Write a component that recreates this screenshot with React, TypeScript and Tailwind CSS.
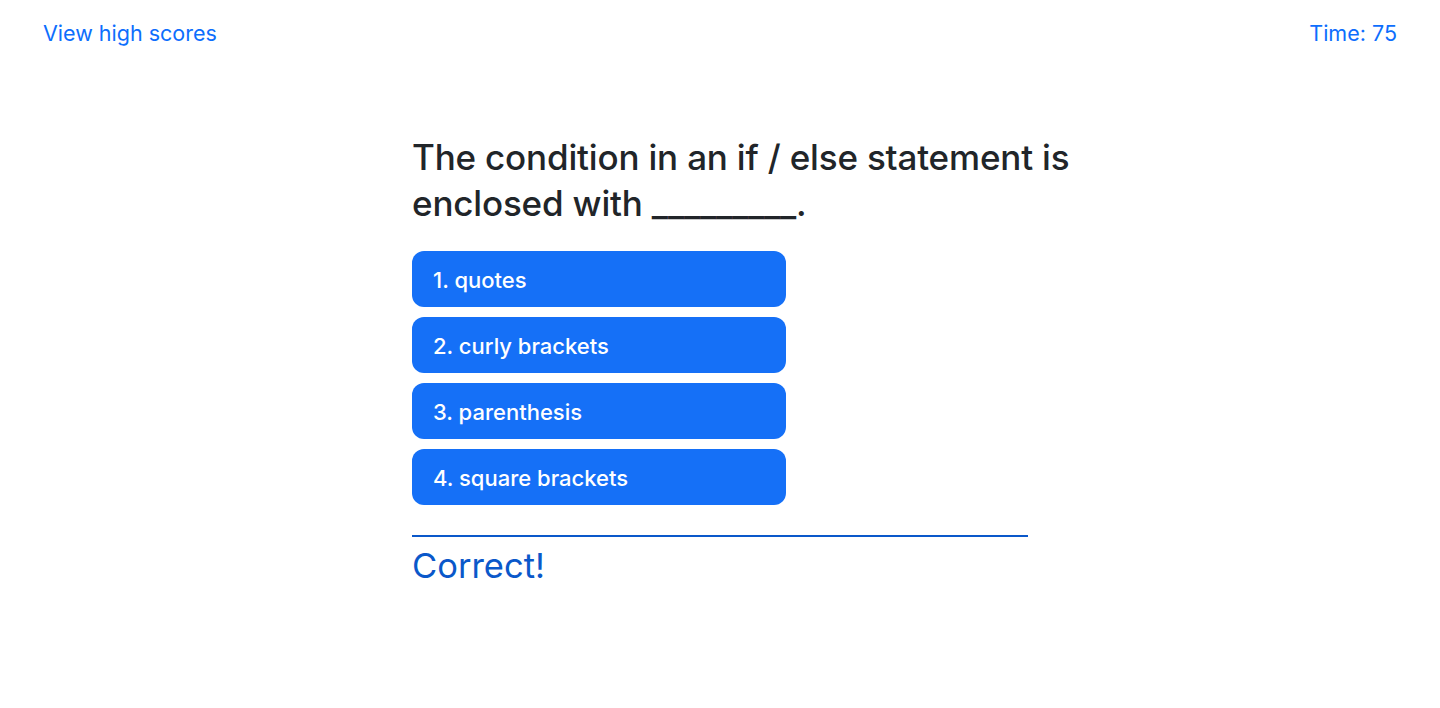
import React from "react";

const choices = ["1. quotes", "2. curly brackets", "3. parenthesis", "4. square brackets"];

export default function App() {
    return (
        <div className="min-h-[708px] bg-white" style={{ fontFamily: "Inter, 'Noto Sans', sans-serif" }}>
            <header className="flex justify-between items-center px-[43px] pt-[20px] text-[21.5px] text-[#0d6efd]">
                <a href="#" className="leading-[26px]">View high scores</a>
                <span className="leading-[26px]">Time: 75</span>
            </header>

            <main className="w-[616px] ml-[412px] mt-[88px]">
                <h2 className="w-[700px] text-[35px] leading-[46px] font-medium tracking-[-0.005em] text-[#212529]">
                    The condition in an if / else statement is enclosed with _________.
                </h2>
                <div className="mt-[25px] flex flex-col gap-[10px]">
                    {choices.map((c) => (
                        <button key={c} className="w-[374px] h-[56px] rounded-[12px] bg-[#1570f7] text-white text-left pl-[21px] pt-[2px] text-[22px] font-medium">
                            {c}
                        </button>
                    ))}
                </div>
                <div className="mt-[30px] border-t-2 border-[#0a58ca] pt-[8px]">
                    <p className="text-[34.5px] leading-[42px] text-[#0a58ca]">Correct!</p>
                </div>
            </main>
        </div>
    );
}
